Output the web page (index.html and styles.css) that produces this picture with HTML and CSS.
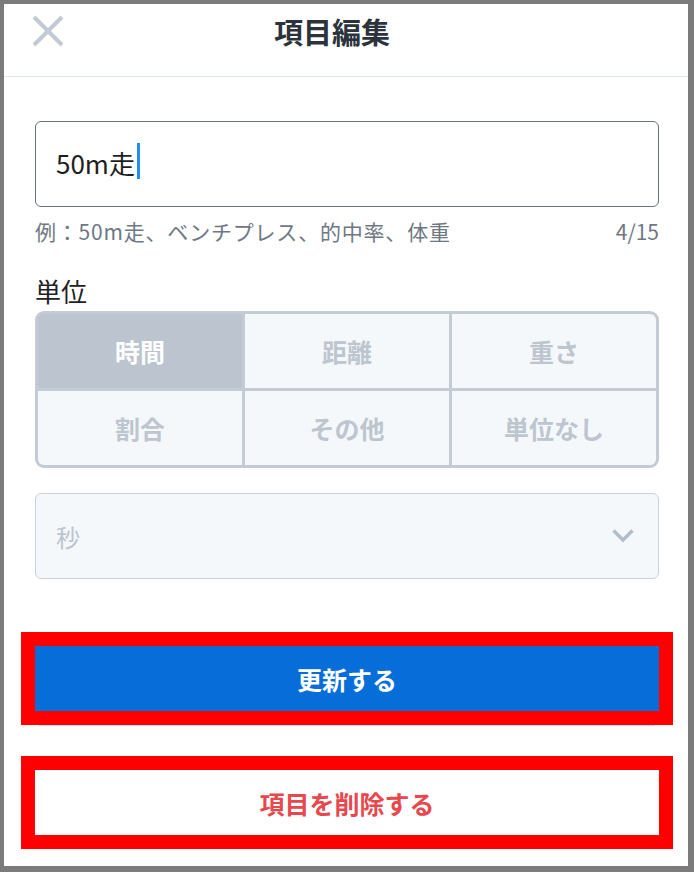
FILE: index.html
```html
<!DOCTYPE html>
<html lang="ja">
<head>
<meta charset="utf-8">
<title>項目編集</title>
<link rel="stylesheet" href="styles.css">
</head>
<body>
<div class="frame">
  <header class="header">
    <button class="close" aria-label="閉じる">
      <svg width="32" height="32" viewBox="0 0 32 32"><path d="M2 2 L30 30 M30 2 L2 30" stroke="#c2cad3" stroke-width="4" fill="none"/></svg>
    </button>
    <h1 class="title">項目編集</h1>
  </header>
  <main class="content">
    <div class="input"><span class="input-text">50m走</span><span class="caret"></span></div>
    <div class="hint"><span class="hint-example">例：50m走、ベンチプレス、的中率、体重</span><span>4/15</span></div>
    <div class="label">単位</div>
    <div class="units">
      <div class="unit unit-selected">時間</div>
      <div class="unit">距離</div>
      <div class="unit">重さ</div>
      <div class="unit">割合</div>
      <div class="unit">その他</div>
      <div class="unit">単位なし</div>
    </div>
    <div class="select">
      <span class="select-text">秒</span>
      <svg class="chevron" width="24" height="16" viewBox="0 0 24 16"><path d="M2.5 2.5 L12 12 L21.5 2.5" stroke="#b3bcc7" stroke-width="3.5" fill="none"/></svg>
    </div>
    <button class="btn btn-primary">更新する</button>
    <button class="btn btn-danger">項目を削除する</button>
  </main>
</div>
</body>
</html>
```

FILE: styles.css
```css
* { box-sizing: border-box; }
html, body { margin: 0; padding: 0; background: #fff; }
body { font-family: "Noto Sans CJK JP", "Noto Sans", sans-serif; color: #222; }

.frame {
  width: 694px;
  height: 872px;
  border-style: solid;
  border-color: #7b7b7b;
  border-width: 4px 6px 6px 4px;
  background: #fff;
  overflow: hidden;
}

.header {
  height: 73px;
  border-bottom: 1px solid #e2e8f3;
  display: flex;
  align-items: flex-start;
}
.close {
  margin: 11px 0 0 28px;
  padding: 0;
  border: 0;
  background: none;
  width: 32px;
  height: 32px;
  display: block;
}
.close svg { display: block; }
.title {
  margin: 7px 0 0 210px;
  font-size: 29px;
  line-height: 40px;
  font-weight: 700;
  color: #2b333d;
}

.content {
  padding: 44px 29px 0 31px;
  display: flex;
  flex-direction: column;
}

.input {
  height: 86px;
  border: 1.5px solid #687482;
  border-radius: 6px;
  display: flex;
  align-items: center;
  padding-left: 20px;
  padding-bottom: 2px;
}
.input-text { font-size: 26px; line-height: 36px; color: #1e1e1e; }
.caret {
  width: 3px;
  height: 36px;
  background: #1e8ff0;
  margin-left: 2px;
  margin-top: -4px;
}

.hint {
  margin-top: 10px;
  display: flex;
  justify-content: space-between;
  font-size: 21px;
  line-height: 28px;
  color: #6e7884;
}
.hint-example { letter-spacing: 0.8px; }

.label {
  margin-top: 29px;
  font-size: 26px;
  line-height: 34px;
  color: #222;
}

.units {
  margin-top: 3px;
  display: grid;
  grid-template-columns: repeat(3, 1fr);
  grid-template-rows: 74px 74px;
  gap: 3px;
  padding: 3px;
  background: #c3cbd5;
  border-radius: 9px;
}
.unit {
  background: #f5f8fb;
  display: flex;
  align-items: center;
  justify-content: center;
  font-size: 25px;
  font-weight: 700;
  color: #bdc5cf;
}
.unit:nth-child(1) { border-top-left-radius: 6px; }
.unit:nth-child(3) { border-top-right-radius: 6px; }
.unit:nth-child(4) { border-bottom-left-radius: 6px; }
.unit:nth-child(6) { border-bottom-right-radius: 6px; }
.unit-selected { background: #bcc5cf; color: #fff; }

.select {
  margin-top: 25px;
  height: 86px;
  border: 1.5px solid #cad2db;
  border-radius: 6px;
  background: #f5f8fb;
  display: flex;
  align-items: center;
  justify-content: space-between;
  padding: 0 23px 0 20px;
}
.select-text { font-size: 24px; color: #bcc4ce; }
.chevron { display: block; }

.btn {
  display: block;
  width: 100%;
  height: 65px;
  border: 0;
  font-family: inherit;
  font-size: 25px;
  font-weight: 700;
  outline: 14px solid #ff0000;
  outline-offset: 0;
}
.btn-primary {
  margin-top: 67px;
  background: #066dd9;
  color: #fff;
  box-shadow: 0 19px 0 -4px #cadcf3;
}
.btn-danger {
  margin-top: 59px;
  background: #fff;
  color: #e8474d;
}
```
